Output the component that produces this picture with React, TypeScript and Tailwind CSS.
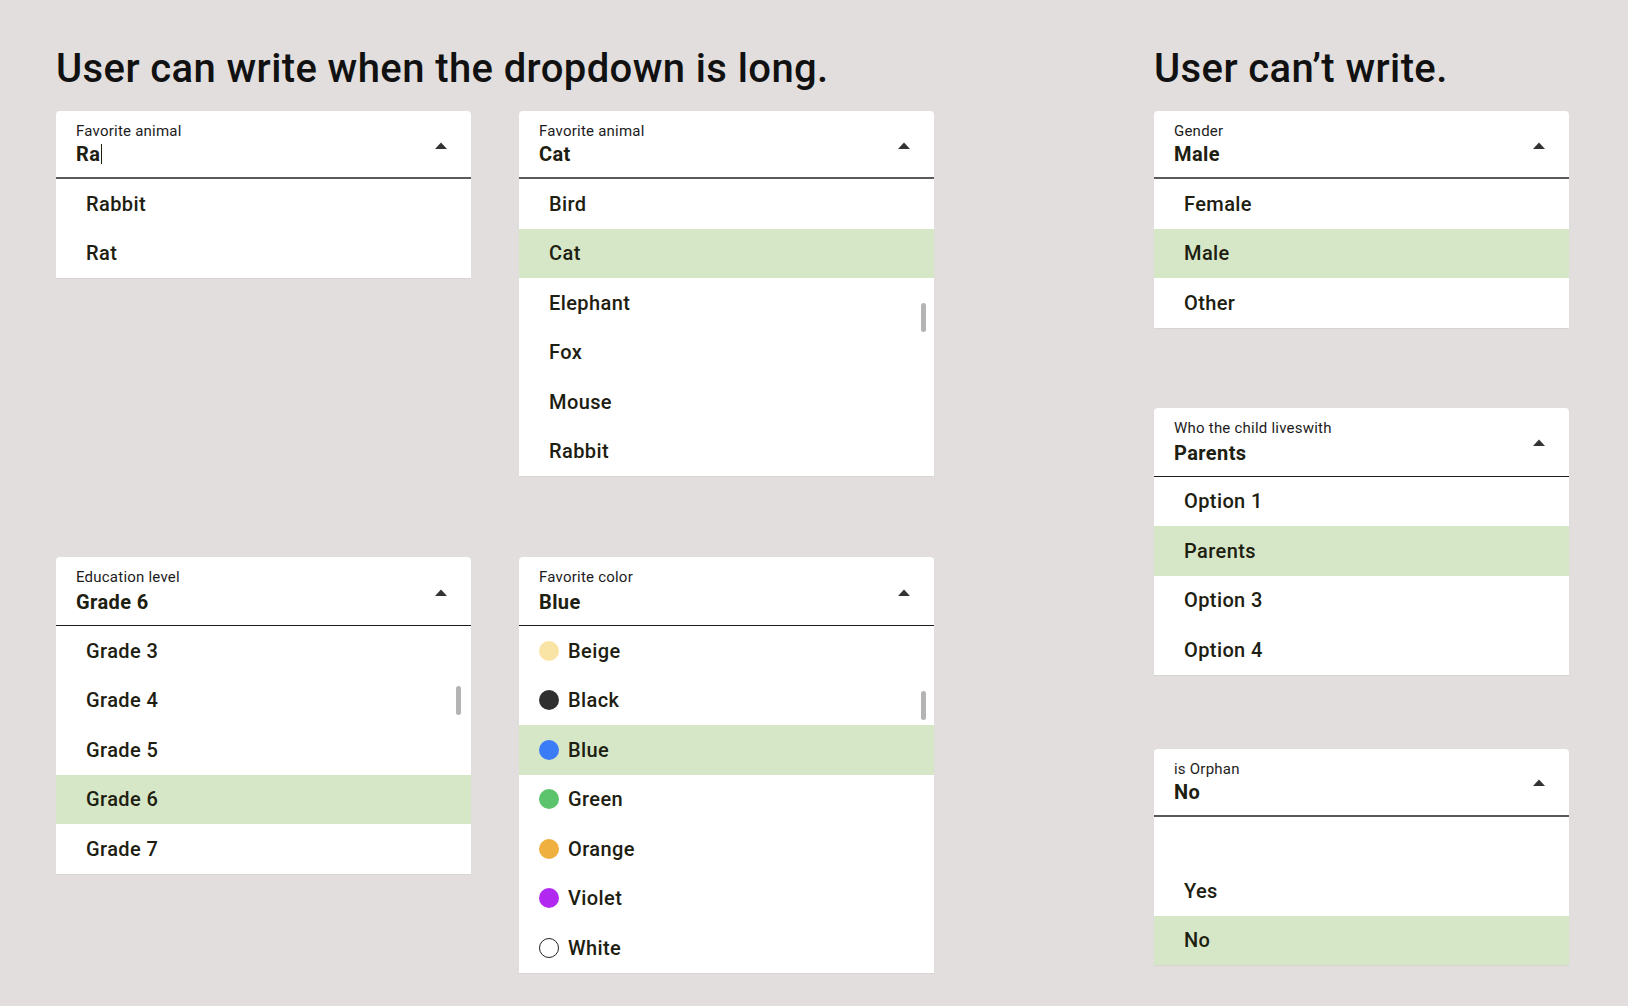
import React from "react";

type Item = { label: string; color?: string; outline?: boolean; selected?: boolean; blank?: boolean };

const Caret = () => (
  <svg width="12" height="7" viewBox="0 0 12 7" className="block">
    <path d="M0 7 L6 0.5 L12 7 Z" fill="#333333" />
  </svg>
);

function Dropdown({
  label,
  value,
  items,
  cursor,
  dark,
  scrollTop,
  scrollRight = 8,
}: {
  label: string;
  value: string;
  items: Item[];
  cursor?: boolean;
  dark?: boolean;
  scrollTop?: number;
  scrollRight?: number;
}) {
  return (
    <div className="w-[415px] bg-white rounded-t-[4px] shadow-[0_1px_1px_rgba(0,0,0,0.05)]">
      <div
        className={
          "flex items-center justify-between pl-[20px] pr-[24px] pt-[11px] pb-[9px] " +
          (dark ? "border-b-[1.5px] border-[#1c1c1c]" : "border-b-2 border-[#5a5a5a]")
        }
      >
        <div className="flex flex-col">
          <div className="text-[15px] leading-[18px] text-[#1c1c1c] font-normal tracking-[0.015em]">{label}</div>
          <div
            className={
              "flex items-center text-[20px] leading-[28px] font-bold text-[#1d2010] tracking-[0.02em] " +
              (dark ? "mt-[2px]" : "")
            }
          >
            {value}
            {cursor && <span className="inline-block w-[1px] h-[20px] bg-[#1d2010] ml-[1px]" />}
          </div>
        </div>
        <Caret />
      </div>
      <div className="relative">
        {items.map((it, i) => (
          <div
            key={i}
            className={
              "h-[49.5px] flex items-center text-[20px] font-medium text-[#1d2010] tracking-[0.02em] " +
              (it.color || it.outline ? "pl-[20px] gap-[9px] " : "pl-[30px] ") +
              (it.selected ? "bg-[#d6e7c8]" : "")
            }
          >
            {it.color && <span className="w-[20px] h-[20px] rounded-full shrink-0" style={{ backgroundColor: it.color }} />}
            {it.outline && <span className="w-[20px] h-[20px] rounded-full shrink-0 bg-white border-[1.5px] border-[#222]" />}
            {!it.blank && <span>{it.label}</span>}
          </div>
        ))}
        {scrollTop !== undefined && (
          <div
            className="absolute w-[5px] h-[29px] rounded-full bg-[#b4b4b4]"
            style={{ top: scrollTop, right: scrollRight }}
          />
        )}
      </div>
    </div>
  );
}

export default function App() {
  return (
    <div
      className="w-full min-h-[1006px] bg-[#e1dedd] flex pl-[56px]"
      style={{ fontFamily: "Roboto, 'Noto Sans', sans-serif" }}
    >
      <div className="w-[878px] flex flex-col pt-[45px]">
        <h1 className="text-[40px] leading-[47px] font-medium text-[#111111] mb-[19px] whitespace-nowrap tracking-[0.4px]">
          User can write when the dropdown is long.
        </h1>
        <div className="grid grid-cols-[415px_415px] gap-x-[48px] grid-rows-[446px_auto] items-start">
          <Dropdown
            label="Favorite animal"
            value="Ra"
            cursor
            items={[{ label: "Rabbit" }, { label: "Rat" }]}
          />
          <Dropdown
            label="Favorite animal"
            value="Cat"
            scrollTop={124}
            items={[
              { label: "Bird" },
              { label: "Cat", selected: true },
              { label: "Elephant" },
              { label: "Fox" },
              { label: "Mouse" },
              { label: "Rabbit" },
            ]}
          />
          <Dropdown
            label="Education level"
            value="Grade 6"
            dark
            scrollTop={60}
            scrollRight={10}
            items={[
              { label: "Grade 3" },
              { label: "Grade 4" },
              { label: "Grade 5" },
              { label: "Grade 6", selected: true },
              { label: "Grade 7" },
            ]}
          />
          <Dropdown
            label="Favorite color"
            value="Blue"
            dark
            scrollTop={65}
            items={[
              { label: "Beige", color: "#f9e4a6" },
              { label: "Black", color: "#2f2f2f" },
              { label: "Blue", color: "#3a7bf6", selected: true },
              { label: "Green", color: "#5bc46d" },
              { label: "Orange", color: "#efb03f" },
              { label: "Violet", color: "#b128f1" },
              { label: "White", outline: true },
            ]}
          />
        </div>
      </div>
      <div className="ml-[220px] w-[415px] flex flex-col pt-[45px]">
        <h1 className="text-[40px] leading-[47px] font-medium text-[#111111] mb-[19px] whitespace-nowrap tracking-[0.4px]">
          User can’t write.
        </h1>
        <Dropdown
          label="Gender"
          value="Male"
          items={[{ label: "Female" }, { label: "Male", selected: true }, { label: "Other" }]}
        />
        <div className="mt-[80px]">
          <Dropdown
            label="Who the child liveswith"
            value="Parents"
            dark
            items={[
              { label: "Option 1" },
              { label: "Parents", selected: true },
              { label: "Option 3" },
              { label: "Option 4" },
            ]}
          />
        </div>
        <div className="mt-[74px]">
          <Dropdown
            label="is Orphan"
            value="No"
            items={[{ label: "", blank: true }, { label: "Yes" }, { label: "No", selected: true }]}
          />
        </div>
      </div>
    </div>
  );
}
